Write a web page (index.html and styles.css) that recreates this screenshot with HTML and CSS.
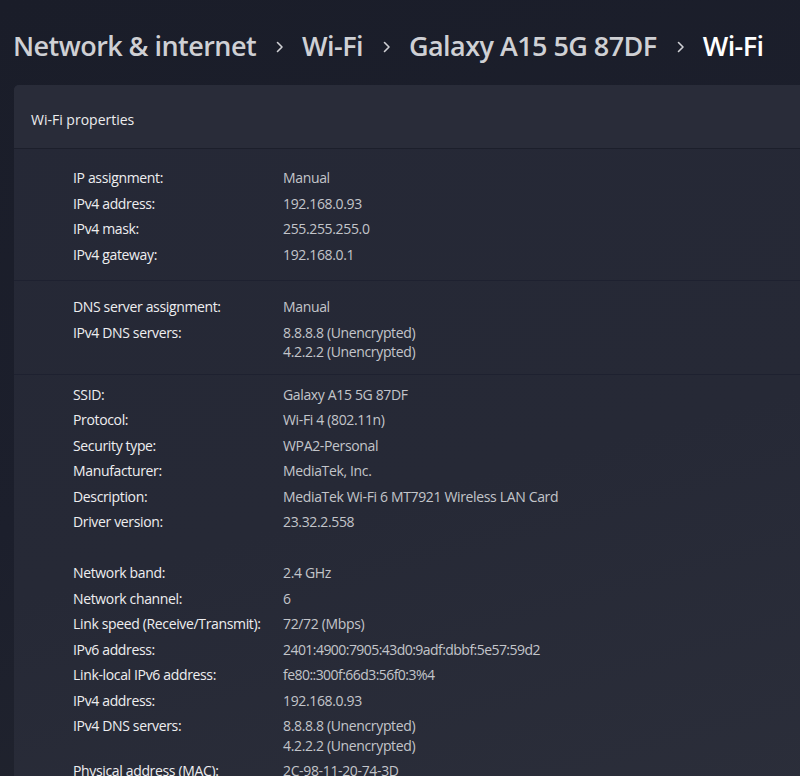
FILE: index.html
```html
<!DOCTYPE html>
<html lang="en">
<head>
<meta charset="utf-8">
<title>Wi-Fi properties</title>
<link rel="stylesheet" href="styles.css">
</head>
<body>
<div class="page">
  <nav class="crumbs">
    <span class="crumb">Network &amp; internet</span>
    <svg class="chev" viewBox="0 0 8 12" width="8" height="12"><polyline points="1.5,1.5 6,6 1.5,10.5"/></svg>
    <span class="crumb">Wi-Fi</span>
    <svg class="chev" viewBox="0 0 8 12" width="8" height="12"><polyline points="1.5,1.5 6,6 1.5,10.5"/></svg>
    <span class="crumb">Galaxy A15 5G 87DF</span>
    <svg class="chev" viewBox="0 0 8 12" width="8" height="12"><polyline points="1.5,1.5 6,6 1.5,10.5"/></svg>
    <span class="crumb current">Wi-Fi</span>
  </nav>

  <section class="card">
    <header class="card-head">Wi-Fi properties</header>

    <div class="group g1">
      <dl class="props">
        <dt>IP assignment:</dt><dd>Manual</dd>
        <dt>IPv4 address:</dt><dd>192.168.0.93</dd>
        <dt>IPv4 mask:</dt><dd>255.255.255.0</dd>
        <dt>IPv4 gateway:</dt><dd>192.168.0.1</dd>
      </dl>
    </div>

    <div class="group g2">
      <dl class="props">
        <dt>DNS server assignment:</dt><dd>Manual</dd>
        <dt>IPv4 DNS servers:</dt><dd>8.8.8.8 (Unencrypted)<br>4.2.2.2 (Unencrypted)</dd>
      </dl>
    </div>

    <div class="group g3">
      <dl class="props">
        <dt>SSID:</dt><dd>Galaxy A15 5G 87DF</dd>
        <dt>Protocol:</dt><dd>Wi-Fi 4 (802.11n)</dd>
        <dt>Security type:</dt><dd>WPA2-Personal</dd>
        <dt>Manufacturer:</dt><dd>MediaTek, Inc.</dd>
        <dt>Description:</dt><dd>MediaTek Wi-Fi 6 MT7921 Wireless LAN Card</dd>
        <dt>Driver version:</dt><dd>23.32.2.558</dd>
      </dl>
      <dl class="props spaced">
        <dt>Network band:</dt><dd>2.4 GHz</dd>
        <dt>Network channel:</dt><dd>6</dd>
        <dt>Link speed (Receive/Transmit):</dt><dd>72/72 (Mbps)</dd>
        <dt>IPv6 address:</dt><dd class="num">2401:4900:7905:43d0:9adf:dbbf:5e57:59d2</dd>
        <dt>Link-local IPv6 address:</dt><dd class="num">fe80::300f:66d3:56f0:3%4</dd>
        <dt>IPv4 address:</dt><dd>192.168.0.93</dd>
        <dt>IPv4 DNS servers:</dt><dd>8.8.8.8 (Unencrypted)<br>4.2.2.2 (Unencrypted)</dd>
        <dt>Physical address (MAC):</dt><dd>2C-98-11-20-74-3D</dd>
      </dl>
    </div>
  </section>
</div>
</body>
</html>
```

FILE: styles.css
```css
html, body {
  margin: 0;
  padding: 0;
  height: 100%;
  overflow: hidden;
}

body {
  background: linear-gradient(160deg, #1a1d29 0%, #1c1f2c 50%, #23262f 100%);
  font-family: "Open Sans", "Noto Sans", sans-serif;
  color: #ececee;
}

.page {
  padding-left: 14px;
}

.crumbs {
  display: flex;
  align-items: center;
  height: 40px;
  padding-top: 26px;
  margin-bottom: 19px;
  margin-left: -1px;
  white-space: nowrap;
}

.crumb {
  font-size: 27px;
  font-weight: 600;
  line-height: 40px;
  color: #cfd0d4;
  letter-spacing: -0.55px;
}

.crumb.current {
  color: #ffffff;
}

.chev {
  margin: 2px 18px 0 20px;
  fill: none;
  stroke: #cfd0d4;
  stroke-width: 1.6;
  stroke-linecap: round;
  stroke-linejoin: round;
}

.card {
  margin-right: -20px;
  border-radius: 5px 0 0 0;
  background: linear-gradient(165deg, #252836 0%, #262936 55%, #2b2e3a 100%);
}

.card-head {
  height: 64px;
  box-sizing: border-box;
  padding: 25px 0 0 17px;
  font-size: 14px;
  line-height: 20px;
  color: #ececee;
  background: #292c39;
  border-radius: 5px 0 0 0;
  border-bottom: 1px solid #1c1f2b;
}

.group {
  padding-left: 59px;
  border-bottom: 1px solid #1e2130;
}

.g1 { padding-top: 19px; padding-bottom: 16px; }
.g2 { padding-top: 16px; padding-bottom: 12px; }
.g3 { padding-top: 10px; padding-bottom: 20px; border-bottom: 0; }

.props {
  display: grid;
  grid-template-columns: 210px 1fr;
  row-gap: 6px;
  margin: 0;
  font-size: 14px;
  line-height: 19.5px;
}

.props.spaced {
  margin-top: 31.5px;
}

.props dt {
  color: #eeeef0;
  letter-spacing: -0.35px;
  white-space: nowrap;
}

.props dd {
  margin: 0;
  color: #c3c5ca;
  letter-spacing: -0.35px;
  white-space: nowrap;
}

.props dd.num {
  letter-spacing: -0.55px;
}
```
